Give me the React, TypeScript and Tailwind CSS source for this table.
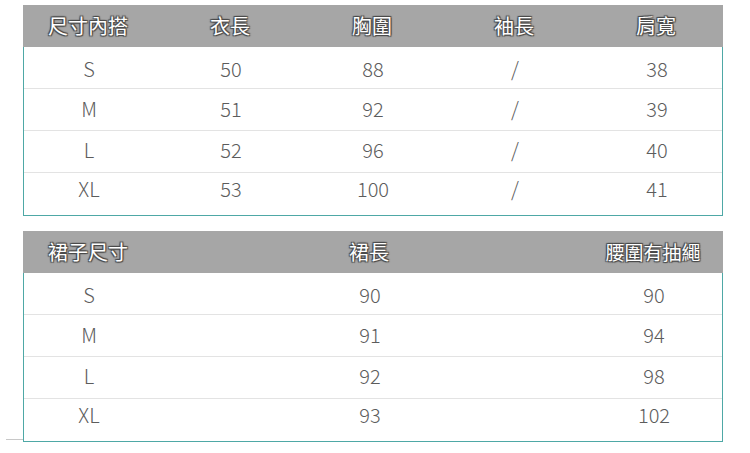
const font = "font-['Noto_Sans_CJK_TC','Noto_Sans',sans-serif]";

const outline =
  "[text-shadow:0_0_1px_#4a4a4a,1px_1px_1px_#4a4a4a,-1px_-1px_1px_#4a4a4a,1px_-1px_1px_#4a4a4a,-1px_1px_1px_#4a4a4a]";

// the text in the source drifts upward a little on each row
const rowPad = ["pt-[3px]", "pb-[1px]", "pb-[3px]", "pb-[11px]"];

type TableProps = {
  cols: string;
  head: { label: string; size?: string }[];
  rows: string[][];
};

function SizeTable({ cols, head, rows }: TableProps) {
  return (
    <div className="w-[700px]">
      <div className={`grid ${cols} h-[42px] items-center bg-[#a6a6a6]`}>
        {head.map((h) => (
          <div
            key={h.label}
            className={`text-center text-white ${h.size ?? "text-[20px]"} ${outline}`}
          >
            {h.label}
          </div>
        ))}
      </div>
      <div className="border-x border-b border-[#4ea8a6]">
        {rows.map((r, i) => (
          <div
            key={i}
            className={`grid ${cols} h-[42px] items-center ${rowPad[i]} ${
              i < rows.length - 1 ? "border-b border-[#e3e3e3]" : ""
            }`}
          >
            {r.map((c, j) => (
              <div key={j} className="text-center text-[20px] font-light text-[#5c5c5c]">
                {c}
              </div>
            ))}
          </div>
        ))}
      </div>
    </div>
  );
}

export default function App() {
  return (
    <div className={`w-[750px] h-[453px] bg-white pt-[5px] pl-[6px] ${font}`}>
      <div className="ml-[17px]">
        <SizeTable
          cols="grid-cols-[130px_154px_130px_154px_130px]"
          head={[
            { label: "尺寸內搭" },
            { label: "衣長" },
            { label: "胸圍" },
            { label: "袖長" },
            { label: "肩寬" },
          ]}
          rows={[
            ["S", "50", "88", "/", "38"],
            ["M", "51", "92", "/", "39"],
            ["L", "52", "96", "/", "40"],
            ["XL", "53", "100", "/", "41"],
          ]}
        />
      </div>
      <div className="mt-[15px] flex items-end">
        <div className="mb-[2px] h-px w-[17px] bg-[#c8c8c8]" />
        <SizeTable
          cols="grid-cols-[130px_432px_136px]"
          head={[
            { label: "裙子尺寸" },
            { label: "裙長" },
            { label: "腰圍有抽繩", size: "text-[19px]" },
          ]}
          rows={[
            ["S", "90", "90"],
            ["M", "91", "94"],
            ["L", "92", "98"],
            ["XL", "93", "102"],
          ]}
        />
      </div>
    </div>
  );
}
